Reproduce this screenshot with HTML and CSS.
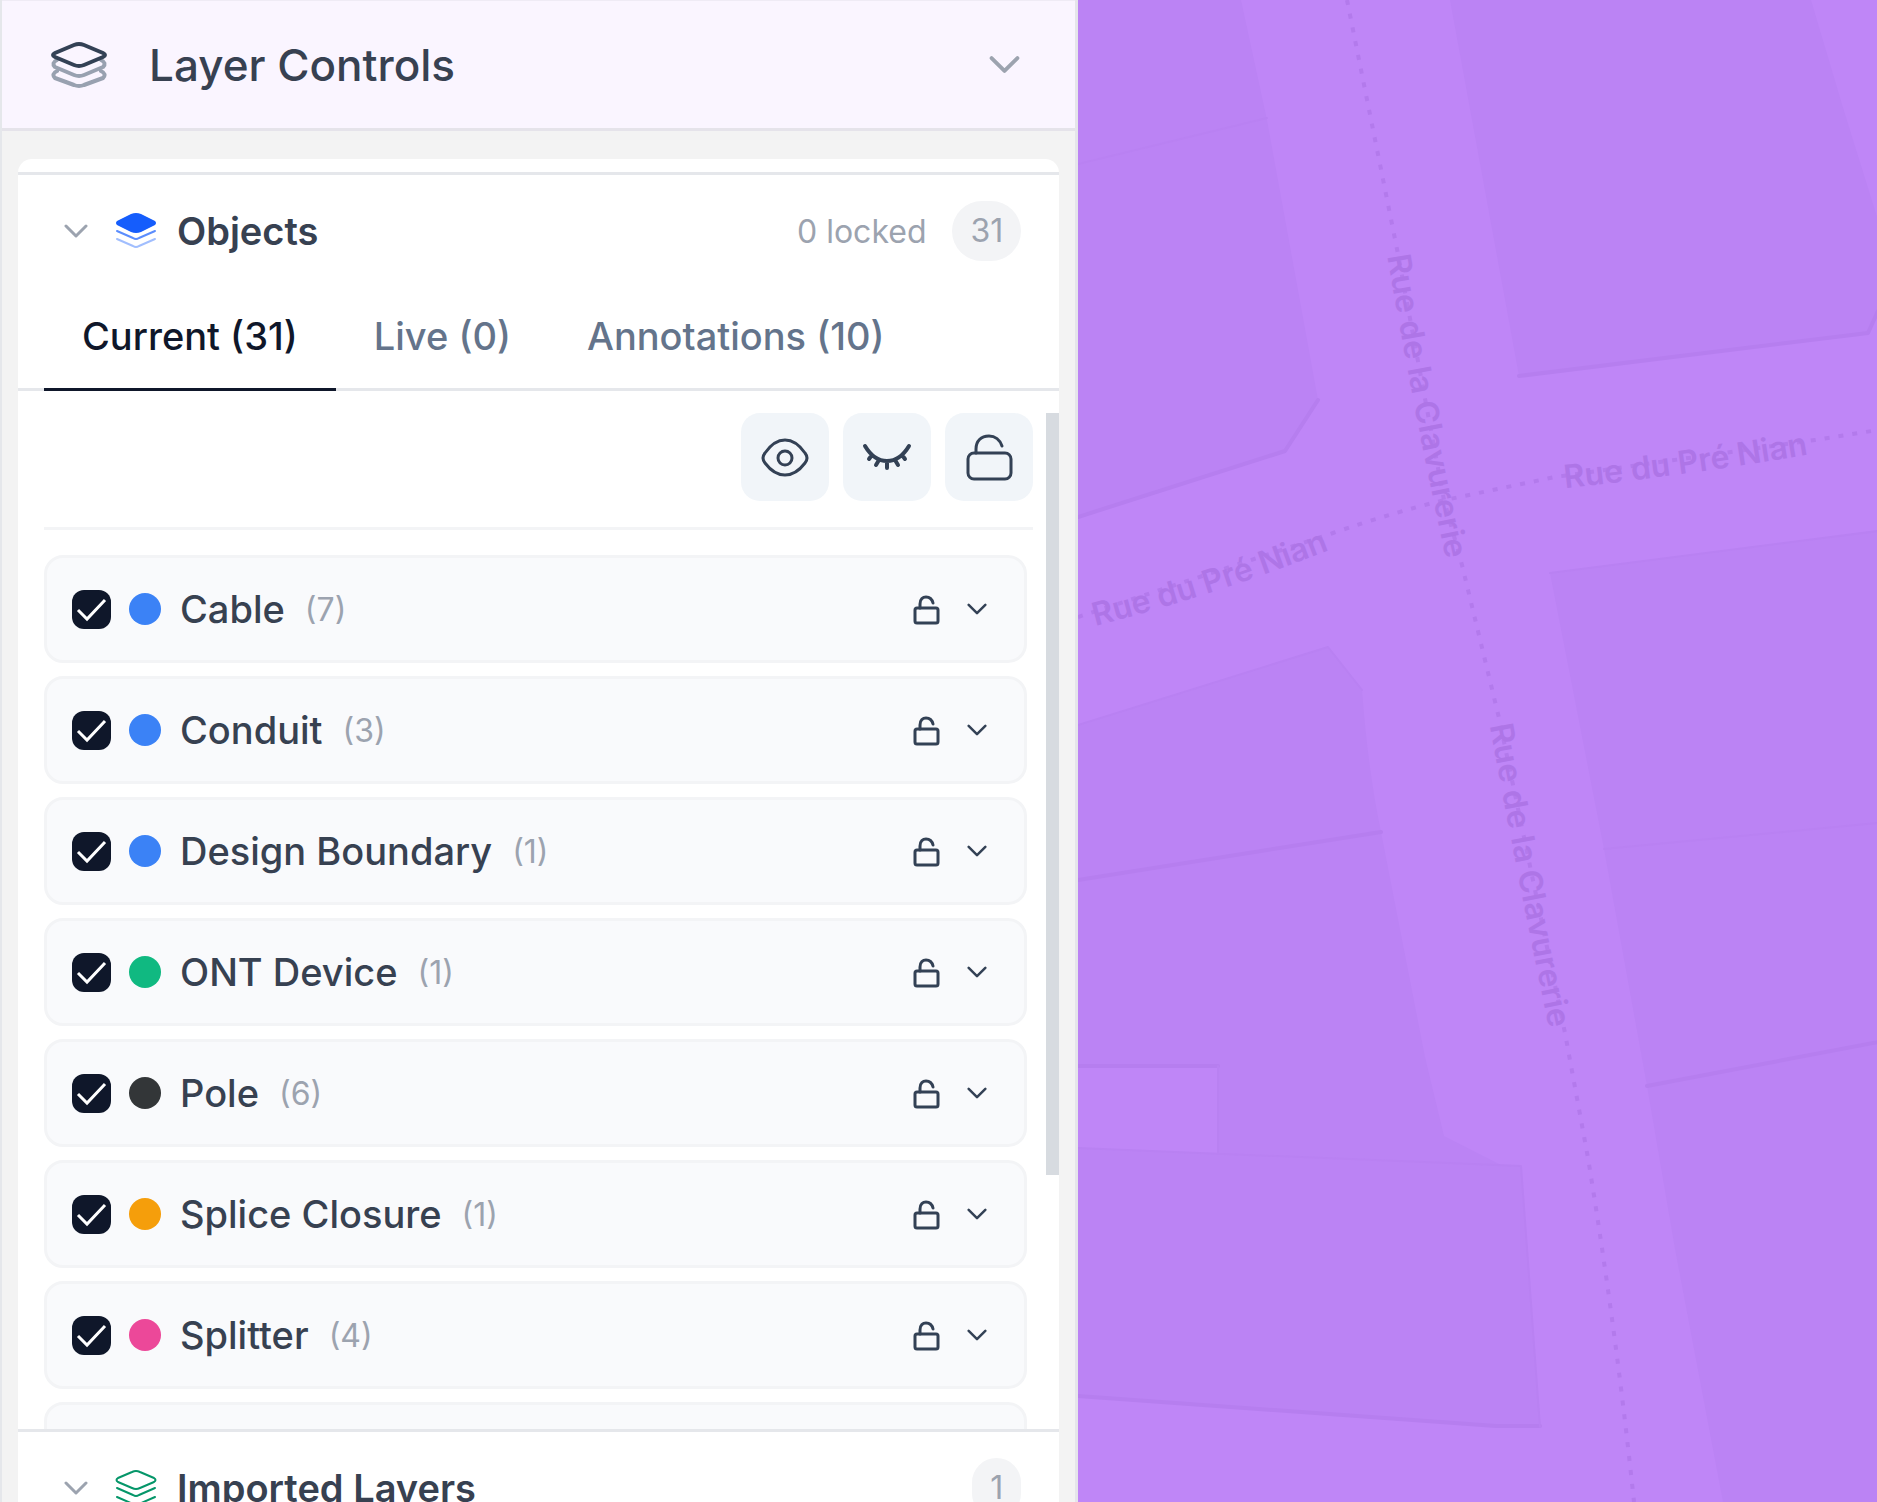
FILE: index.html
```
<!DOCTYPE html>
<html lang="en">
	<head>
		<meta charset="utf-8" />
		<title>Layer Controls</title>
		<link rel="stylesheet" href="styles.css">
	</head>
	<body>
		<svg class="defs" width="0" height="0" aria-hidden="true">
			<symbol id="chevron" viewBox="0 0 24 24">
				<path d="M2 7l10 10 10-10" />
			</symbol>
			<symbol id="unlock" viewBox="0 0 32 36">
				<rect x="4" y="17" width="23" height="15" rx="2" />
				<path d="M9 17v-4c0-5 3-7 6-7 4 0 6 2 7 6" />
			</symbol>
		</svg>
		<div class="app">
			<aside class="panel">
				<button class="panel-header" type="button" aria-expanded="true">
					<svg class="icon-layers" viewBox="0 0 60 48">
						<path class="faded" d="M8 19Q2 22 6 26L25 34Q30 36 35 34L54 26Q58 22 52 19" />
						<path class="faded" d="M8 30Q2 33 6 37L25 44Q30 46 35 44L54 37Q58 33 52 30" />
						<path d="M6 12L25 4Q30 2 35 4L54 12Q58 14 54 16L35 24Q30 26 25 24L6 16Q2 14 6 12Z" />
					</svg>
					<span class="panel-title">Layer Controls</span>
					<svg class="chevron chevron-lg"><use href="#chevron" /></svg>
				</button>
				<div class="panel-body">
					<div class="card">
						<section class="section">
							<div class="section-header">
								<svg class="chevron chevron-md"><use href="#chevron" /></svg>
								<svg class="icon-section blue" viewBox="0 0 42 38">
									<path class="solid" d="M2 9L16 2Q21 0 26 2L40 9Q42 11 40 13L26 20Q21 22 16 20L2 13Q0 11 2 9Z" />
									<path class="mid" d="M2 19L18 26Q21 28 24 26L40 19" />
									<path class="light" d="M2 27L18 34Q21 36 24 34L40 27" />
								</svg>
								<h2>Objects</h2>
								<span class="locked">0 locked</span>
								<span class="badge">31</span>
							</div>
							<div class="tabs" role="tablist">
								<button type="button" role="tab" class="tab active" aria-selected="true">Current (31)</button>
								<button type="button" role="tab" class="tab" aria-selected="false">Live (0)</button>
								<button type="button" role="tab" class="tab" aria-selected="false">Annotations (10)</button>
							</div>
							<div class="scroll-area">
								<div class="toolbar">
									<button type="button" class="tool" aria-label="Show all">
										<svg viewBox="0 0 88 88">
											<path d="M24 40Q33 27 44 27T64 40Q68 45 64 50Q55 62 44 62T24 50Q20 45 24 40Z" />
											<circle cx="44" cy="45" r="7" />
										</svg>
									</button>
									<button type="button" class="tool" aria-label="Hide all">
										<svg class="lashes" viewBox="0 0 88 88">
											<path d="M22 33Q31 48 44 48T66 33M29 42l-3 4M36 47l-3 5M44 48v7M52 47l3 5M59 42l3 4" />
										</svg>
									</button>
									<button type="button" class="tool" aria-label="Unlock all">
										<svg viewBox="0 0 88 88">
											<rect x="23" y="40" width="43" height="26" rx="6" />
											<path d="M31 40v-4c0-8 5-13 13-13 6 0 11 4 13 10" />
										</svg>
									</button>
								</div>
								<ul class="list">
									<li class="row">
										<input type="checkbox" id="cable" checked>
										<span class="dot blue-dot"></span>
										<label for="cable">Cable</label>
										<span class="count">(7)</span>
										<button type="button" class="row-btn lock" aria-label="Lock"><svg><use href="#unlock" /></svg></button>
										<button type="button" class="row-btn" aria-label="Expand"><svg class="chevron chevron-sm"><use href="#chevron" /></svg></button>
									</li>
									<li class="row">
										<input type="checkbox" id="conduit" checked>
										<span class="dot blue-dot"></span>
										<label for="conduit">Conduit</label>
										<span class="count">(3)</span>
										<button type="button" class="row-btn lock" aria-label="Lock"><svg><use href="#unlock" /></svg></button>
										<button type="button" class="row-btn" aria-label="Expand"><svg class="chevron chevron-sm"><use href="#chevron" /></svg></button>
									</li>
									<li class="row">
										<input type="checkbox" id="boundary" checked>
										<span class="dot blue-dot"></span>
										<label for="boundary">Design Boundary</label>
										<span class="count">(1)</span>
										<button type="button" class="row-btn lock" aria-label="Lock"><svg><use href="#unlock" /></svg></button>
										<button type="button" class="row-btn" aria-label="Expand"><svg class="chevron chevron-sm"><use href="#chevron" /></svg></button>
									</li>
									<li class="row">
										<input type="checkbox" id="ont" checked>
										<span class="dot green-dot"></span>
										<label for="ont">ONT Device</label>
										<span class="count">(1)</span>
										<button type="button" class="row-btn lock" aria-label="Lock"><svg><use href="#unlock" /></svg></button>
										<button type="button" class="row-btn" aria-label="Expand"><svg class="chevron chevron-sm"><use href="#chevron" /></svg></button>
									</li>
									<li class="row">
										<input type="checkbox" id="pole" checked>
										<span class="dot dark-dot"></span>
										<label for="pole">Pole</label>
										<span class="count">(6)</span>
										<button type="button" class="row-btn lock" aria-label="Lock"><svg><use href="#unlock" /></svg></button>
										<button type="button" class="row-btn" aria-label="Expand"><svg class="chevron chevron-sm"><use href="#chevron" /></svg></button>
									</li>
									<li class="row">
										<input type="checkbox" id="closure" checked>
										<span class="dot orange-dot"></span>
										<label for="closure">Splice Closure</label>
										<span class="count">(1)</span>
										<button type="button" class="row-btn lock" aria-label="Lock"><svg><use href="#unlock" /></svg></button>
										<button type="button" class="row-btn" aria-label="Expand"><svg class="chevron chevron-sm"><use href="#chevron" /></svg></button>
									</li>
									<li class="row">
										<input type="checkbox" id="splitter" checked>
										<span class="dot pink-dot"></span>
										<label for="splitter">Splitter</label>
										<span class="count">(4)</span>
										<button type="button" class="row-btn lock" aria-label="Lock"><svg><use href="#unlock" /></svg></button>
										<button type="button" class="row-btn" aria-label="Expand"><svg class="chevron chevron-sm"><use href="#chevron" /></svg></button>
									</li>
									<li class="row"></li>
								</ul>
								<div class="scroll-thumb"></div>
							</div>
						</section>
						<section class="section">
							<div class="section-header">
								<svg class="chevron chevron-md"><use href="#chevron" /></svg>
								<svg class="icon-section green" viewBox="0 0 42 38">
									<path d="M3 9L17 3Q21 1 25 3L39 9Q42 11 39 13L25 19Q21 21 17 19L3 13Q0 11 3 9Z" />
									<path d="M2 19L18 26Q21 28 24 26L40 19" />
									<path d="M2 28L18 35Q21 37 24 35L40 28" />
								</svg>
								<h2>Imported Layers</h2>
								<span class="badge">1</span>
							</div>
						</section>
					</div>
				</div>
			</aside>
			<main class="map">
				<svg viewBox="0 0 799 1502" preserveAspectRatio="xMinYMin slice">
					<!-- buildings -->
					<g class="building">
						<path d="M0 0H163L189 120 240 400 207 451 0 517Z" />
						<path d="M372 0L441 376 790 333 800 311V220Q765 110 733 0Z" />
						<path d="M472 573L800 531V1502H645L597 1249 569 1086 526 849Z" />
						<path d="M0 725L250 647 284 690Q290 770 303 832L347 1057 366 1136 423 1165 443 1166 462 1427 418 1426 0 1396V1148L140 1154V1066H0Z" />
					</g>
					<!-- walls -->
					<g class="wall">
						<path d="M0 517L207 451 240 400M441 376L790 333 800 311M0 880L303 832M0 1066H140M569 1086L800 1042M0 1396L418 1426H462" />
						<path class="thin" d="M0 164L189 118M0 725L250 647 284 690M472 573L800 531M526 849L800 823M0 1148L443 1166 462 1427M140 1066V1154" />
					</g>
					<!-- streets -->
					<g class="street">
						<path d="M269 0L319 249 366 500 384 565 421 718 487 1033 510 1158Q538 1330 556 1502" />
						<path d="M0 617L255 533Q320 511 367 500L477 477 737 440 800 430" />
					</g>
					<path id="street1" class="guide" d="M316 235Q345 410 382 576" />
					<path id="street2" class="guide" d="M418 704Q450 880 485 1046" />
					<path id="street3" class="guide" d="M0 620Q130 588 262 535" />
					<path id="street4" class="guide" d="M470 480Q620 464 744 442" />
					<g class="street-name">
						<text dy="10"><textPath href="#street1" startOffset="50%">Rue de la Clavurerie</textPath></text>
						<text dy="10"><textPath href="#street2" startOffset="50%">Rue de la Clavurerie</textPath></text>
						<text dy="10"><textPath href="#street3" startOffset="50%">Rue du Pré Nian</textPath></text>
						<text dy="10"><textPath href="#street4" startOffset="50%">Rue du Pré Nian</textPath></text>
					</g>
				</svg>
			</main>
		</div>
	</body>
</html>
```
FILE: styles.css
```
* {
	box-sizing: border-box;
}
body {
	margin: 0;
	font-family: Inter, "Liberation Sans", sans-serif;
	font-size: 38px;
	color: #374151;
}
button {
	font: inherit;
	color: inherit;
	border: none;
	background: none;
	padding: 0;
	cursor: pointer;
}
svg {
	display: block;
	flex: none;
	fill: none;
	stroke: currentColor;
	stroke-width: 3;
	stroke-linecap: round;
	stroke-linejoin: round;
}
.defs {
	position: absolute;
}
.app {
	display: grid;
	grid-template-columns: 27fr 20fr;
	height: 100vh;
	overflow: hidden;
}
.panel {
	display: flex;
	flex-direction: column;
	min-width: 0;
	height: 100vh;
	overflow: hidden;
	border-left: 2px solid #e5e7eb;
	border-right: 3px solid #e5e5ea;
	background: #f3f3f3;
}
.panel-header {
	display: flex;
	flex: none;
	align-items: center;
	height: 131px;
	padding: 0 55px 0 47px;
	border-top: 1px solid #efebf5;
	border-bottom: 3px solid #e5e3ea;
	background: #faf5ff;
	text-align: left;
}
.icon-layers {
	width: 60px;
	height: 48px;
	color: #334155;
	stroke-width: 4;
}
.faded {
	stroke: #98a1b0;
}
.panel-title {
	flex: 1;
	padding-left: 40px;
	font-size: 44px;
	font-weight: 500;
}
.chevron {
	color: #9ca3af;
}
.chevron-lg {
	width: 31px;
	height: 31px;
	stroke-width: 3;
}
.chevron-md {
	width: 24px;
	height: 24px;
}
.chevron-sm {
	width: 20px;
	height: 20px;
	color: #334155;
}
.panel-body {
	padding: 28px 16px 0;
}
.card {
	padding-top: 13px;
	border-radius: 14px 14px 0 0;
	background: #fff;
}
.section {
	border-top: 3px solid #e5e7eb;
}
.section-header {
	display: flex;
	align-items: center;
	padding: 26px 38px 26px 46px;
}
.icon-section {
	width: 42px;
	height: 38px;
	margin: 0 20px 0 27px;
	stroke-width: 2;
}
.blue {
	color: #155dfc;
}
.green {
	color: #059669;
}
.solid {
	fill: currentColor;
	stroke: none;
}
.mid {
	opacity: 0.7;
}
.light {
	opacity: 0.4;
}
h2 {
	flex: 1;
	margin: 0;
	font-size: 38px;
	font-weight: 600;
	line-height: 60px;
}
.locked {
	margin-right: 26px;
	font-size: 32px;
	color: #9ca3af;
}
.badge {
	padding: 0 18px;
	border-radius: 30px;
	background: #f3f4f6;
	font-size: 32px;
	line-height: 60px;
	color: #9ca3af;
}
.tabs {
	display: flex;
	height: 104px;
	padding: 0 26px;
	border-bottom: 3px solid #e5e7eb;
}
.tab {
	margin-bottom: -3px;
	padding: 0 38px 3px;
	border-bottom: 3px solid transparent;
	font-weight: 500;
	color: #64748b;
}
.tab.active {
	border-bottom-color: #0f172a;
	color: #0f172a;
}
.scroll-area {
	position: relative;
	height: calc(69vh - 20px);
	margin-top: 22px;
	padding: 0 26px;
	overflow: hidden;
}
.scroll-thumb {
	position: absolute;
	top: 0;
	right: 0;
	width: 13px;
	height: 75%;
	background: #d7dbe0;
}
.toolbar {
	display: flex;
	justify-content: flex-end;
	gap: 14px;
	padding-bottom: 26px;
	border-bottom: 3px solid #f3f4f6;
}
.tool {
	width: 88px;
	height: 88px;
	border-radius: 19px;
	background: #f1f5f9;
	color: #334155;
}
.tool svg {
	width: 88px;
	height: 88px;
}
.lashes {
	stroke-width: 4;
}
.list {
	display: flex;
	flex-direction: column;
	gap: 13px;
	margin: 0;
	padding: 25px 6px 0 0;
	list-style: none;
}
.row {
	display: flex;
	flex: none;
	align-items: center;
	height: 108px;
	padding: 0 37px 0 25px;
	border: 3px solid #f3f4f6;
	border-radius: 19px;
	background: #f9fafc;
}
.row input {
	appearance: none;
	flex: none;
	width: 39px;
	height: 39px;
	margin: 0;
	border-radius: 12px;
	background: #0f172a url("data:image/svg+xml,%3Csvg xmlns='http://www.w3.org/2000/svg' viewBox='0 0 39 39'%3E%3Cpath d='M6 20l9 9L33 10' fill='none' stroke='white' stroke-width='3'/%3E%3C/svg%3E");
}
.dot {
	flex: none;
	width: 32px;
	height: 32px;
	margin: 0 19px 0 18px;
	border-radius: 50%;
}
.blue-dot {
	background: #3b82f6;
}
.green-dot {
	background: #10b981;
}
.dark-dot {
	background: #333638;
}
.orange-dot {
	background: #f59e0b;
}
.pink-dot {
	background: #ec4899;
}
.row label {
	font-weight: 500;
}
.count {
	flex: 1;
	padding-left: 20px;
	font-size: 32px;
	color: #9ca3af;
}
.row-btn {
	color: #334155;
}
.lock {
	margin-right: 24px;
}
.lock svg {
	width: 32px;
	height: 36px;
}
.map {
	min-width: 0;
	background: #bf86f7;
	overflow: hidden;
}
.map svg {
	width: 100%;
	height: 100%;
	stroke: none;
}
.map .building {
	fill: #bb83f4;
}
.map .wall {
	stroke: #b67eef;
	stroke-width: 4;
}
.map .thin {
	stroke: #b981f2;
	stroke-width: 2;
}
.map .street {
	stroke: #b37aec;
	stroke-width: 4;
	stroke-linecap: butt;
	stroke-dasharray: 5 9;
}
.street-name {
	fill: #ae75e7;
	font-size: 32px;
	font-weight: 600;
	text-anchor: middle;
}
```
